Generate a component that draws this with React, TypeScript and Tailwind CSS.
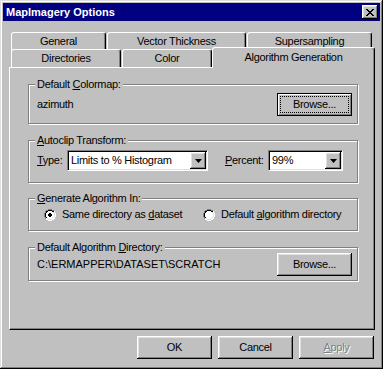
const raised =
  "shadow-[inset_-1px_-1px_#000,inset_1px_1px_#fff,inset_-2px_-2px_#808080,inset_2px_2px_#dfdfdf]";

function U({ children }: { children: string }) {
  return <span className="underline underline-offset-[1px]">{children}</span>;
}

function Group({
  label,
  className,
  children,
}: {
  label: React.ReactNode;
  className: string;
  children?: React.ReactNode;
}) {
  return (
    <div
      className={`relative border border-[#808080] shadow-[inset_1px_1px_#fff,1px_1px_#fff] ${className}`}
    >
      <span className="absolute -top-[7px] left-[6px] bg-[#c0c0c0] px-[2px] leading-[13px]">{label}</span>
      {children}
    </div>
  );
}

function Button({ children, isDefault, disabled }: { children: React.ReactNode; isDefault?: boolean; disabled?: boolean }) {
  if (isDefault) {
    return (
      <div className="flex h-[23px] w-[75px] border border-black p-[2px] shadow-[inset_1px_1px_#fff,inset_-1px_-1px_#808080]">
        <div className="flex flex-1 items-center justify-center border border-dotted border-black">{children}</div>
      </div>
    );
  }
  return (
    <div
      className={`flex h-[23px] w-[75px] items-center justify-center ${raised} ${
        disabled ? "text-[#808080] [text-shadow:1px_1px_#fff]" : ""
      }`}
    >
      {children}
    </div>
  );
}

function Combo({ value, width }: { value: string; width: string }) {
  return (
    <div
      className={`flex h-[21px] ${width} items-center border-t border-l border-t-[#808080] border-l-[#808080] border-r border-b border-white bg-white shadow-[inset_1px_1px_#000,inset_-1px_-1px_#dfdfdf]`}
    >
      <span className="flex-1 pl-[3px] leading-[13px]">{value}</span>
      <div className={`mr-[1px] flex h-[17px] w-[16px] items-center justify-center bg-[#c0c0c0] ${raised}`}>
        <svg width="7" height="4" viewBox="0 0 7 4">
          <path d="M0 0h7L3.5 4z" fill="#000" />
        </svg>
      </div>
    </div>
  );
}

function Radio({ checked, label }: { checked?: boolean; label: React.ReactNode }) {
  return (
    <div className="flex items-center gap-[6px]">
      <svg width="12" height="12" viewBox="0 0 12 12" shapeRendering="crispEdges">
        <path d="M4 0h4v1h2v1h1v2h1v4h-1v2h-1v1h-2v1h-4v-1h-2v-1h-1v-2h-1v-4h1v-2h1v-1h2z" fill="#fff" />
        <path d="M4 0h4v1h-4zM2 1h2v1h-2zM8 1h2v1h-2zM1 2h1v2h-1zM0 4h1v4h-1zM1 8h1v2h-1z" fill="#808080" />
        <path d="M4 1h4v1h-4zM2 2h2v1h-2zM8 2h2v1h-2zM2 3h1v1h-1zM1 4h1v4h-1zM2 8h1v1h-1z" fill="#000" />
        <path d="M10 2h1v2h-1zM11 4h1v4h-1zM10 8h1v2h-1zM8 10h2v1h-2zM2 10h2v1h-2zM4 11h4v1h-4z" fill="#fff" />
        <path d="M9 3h1v1h-1zM10 4h1v4h-1zM9 8h1v1h-1zM8 9h1v1h-1zM3 9h1v1h-1zM4 10h4v1h-4z" fill="#dfdfdf" />
        {checked && <path d="M5 4h2v1h1v2h-1v1h-2v-1h-1v-2h1z" fill="#000" />}
      </svg>
      <span className="leading-[13px]">{label}</span>
    </div>
  );
}

const tab =
  "flex items-center justify-center border-l border-t border-white border-r border-r-black rounded-t-[3px] shadow-[inset_-1px_0_#808080] bg-[#c0c0c0]";

export default function App() {
  return (
    <div className="h-[369px] w-[383px] bg-[#c0c0c0] p-[3px] font-['Liberation_Sans',Arial,sans-serif] text-[11px] tracking-[-0.3px] text-black shadow-[inset_-1px_-1px_#000,inset_1px_1px_#dfdfdf,inset_-2px_-2px_#808080,inset_2px_2px_#fff]">
      {/* title bar */}
      <div className="flex h-[18px] items-center justify-between bg-[#000080] pl-[3px] pr-[2px]">
        <span className="font-bold leading-[13px] tracking-normal text-white">MapImagery Options</span>
        <div className={`flex h-[14px] w-[16px] items-center justify-center bg-[#c0c0c0] ${raised}`}>
          <svg width="8" height="7" viewBox="0 0 8 7" shapeRendering="crispEdges">
            <path
              d="M0 0h2v1h-2zM6 0h2v1h-2zM1 1h2v1h-2zM5 1h2v1h-2zM2 2h4v1h-4zM3 3h2v1h-2zM2 4h4v1h-4zM1 5h2v1h-2zM5 5h2v1h-2zM0 6h2v1h-2zM6 6h2v1h-2z"
              fill="#000"
            />
          </svg>
        </div>
      </div>

      {/* tabs */}
      <div className="ml-[6px] mt-[11px] w-[366px]">
        <div className="flex h-[17px] pl-[2px]">
          <div className={`${tab} h-[19px] w-[95px]`}>
            <span className="mb-[2px]">General</span>
          </div>
          <div className={`${tab} ml-[1px] h-[19px] w-[139px]`}>
            <span className="mb-[2px]">Vector Thickness</span>
          </div>
          <div className={`${tab} ml-[1px] h-[19px] w-[125px]`}>
            <span className="mb-[2px]">Supersampling</span>
          </div>
        </div>
        <div className="relative flex h-[18px] items-end pl-[2px]">
          <div className={`${tab} h-[18px] w-[110px]`}>Directories</div>
          <div className={`${tab} ml-[1px] h-[18px] w-[90px]`}>Color</div>
          <div className={`${tab} relative z-10 -mb-[1px] h-[21px] w-[163px] pb-[2px]`}>Algorithm Generation</div>
        </div>

        {/* panel */}
        <div className="h-[263px] border-l border-t border-white border-r border-b border-r-black border-b-black pl-[18px] pt-[16px] shadow-[inset_-1px_-1px_#808080]">
          <Group
            className="flex h-[40px] w-[330px] items-center justify-between pl-[8px] pr-[5px]"
            label={
              <>
                Default <U>C</U>olormap:
              </>
            }
          >
            <span>azimuth</span>
            <Button isDefault>Browse...</Button>
          </Group>

          <Group
            className="mt-[16px] flex h-[43px] w-[330px] items-start pl-[8px] pt-[9px]"
            label={
              <>
                <U>A</U>utoclip Transform:
              </>
            }
          >
            <span className="w-[30px] leading-[21px]">
              <U>T</U>ype:
            </span>
            <Combo value="Limits to % Histogram" width="w-[141px]" />
            <span className="ml-[17px] w-[43px] leading-[21px]">
              <U>P</U>ercent:
            </span>
            <Combo value="99%" width="w-[75px]" />
          </Group>

          <Group
            className="mt-[15px] flex h-[33px] w-[330px] items-center pl-[15px]"
            label={
              <>
                <U>G</U>enerate Algorithm In:
              </>
            }
          >
            <div className="w-[159px]">
              <Radio
                checked
                label={
                  <>
                    Same directory as <U>d</U>ataset
                  </>
                }
              />
            </div>
            <Radio
              label={
                <>
                  Default <U>a</U>lgorithm directory
                </>
              }
            />
          </Group>

          <Group
            className="mt-[16px] flex h-[34px] w-[330px] items-center justify-between pl-[8px] pr-[5px]"
            label={
              <>
                Default Algorithm <U>D</U>irectory:
              </>
            }
          >
            <span className="tracking-normal">C:\ERMAPPER\DATASET\SCRATCH</span>
            <Button>Browse...</Button>
          </Group>
        </div>

        {/* dialog buttons */}
        <div className="mt-[6px] flex justify-end gap-[6px] pr-[1px]">
          <Button>OK</Button>
          <Button>Cancel</Button>
          <Button disabled>
            <U>A</U>pply
          </Button>
        </div>
      </div>
    </div>
  );
}
